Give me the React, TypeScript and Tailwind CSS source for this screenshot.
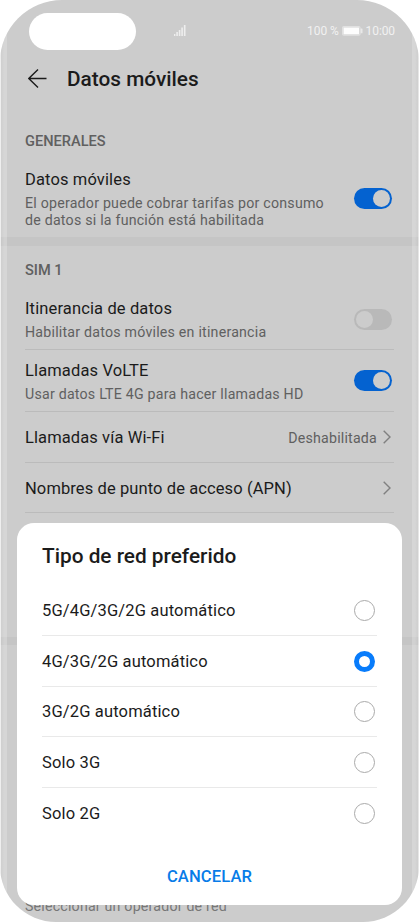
import React, { useState } from 'react';
import clsx from 'clsx';

const NETWORK_TYPES = [
  '5G/4G/3G/2G automático',
  '4G/3G/2G automático',
  '3G/2G automático',
  'Solo 3G',
  'Solo 2G',
];

const Toggle: React.FC<{ on: boolean }> = ({ on }) => (
  <span
    className={clsx(
      'flex h-[21px] w-[38px] shrink-0 items-center rounded-full px-[2px]',
      on ? 'justify-end bg-[#0462d0]' : 'justify-start bg-[#b9b9b9]',
    )}
  >
    <span className="h-[17px] w-[17px] rounded-full bg-[#cccccc]" />
  </span>
);

const Chevron = () => (
  <svg width="8" height="14" viewBox="0 0 8 14" fill="none" stroke="#808080" strokeWidth="1.4">
    <path d="M0.7 0.7 7 7 0.7 13.3" />
  </svg>
);

interface SwitchRowProps {
  title: string;
  text: string;
  on: boolean;
  className?: string;
}

const SwitchRow: React.FC<SwitchRowProps> = ({ title, text, on, className }) => (
  <div className={clsx('mx-[25px] flex items-center justify-between pr-[2px]', className)}>
    <div className="pt-[2px]">
      <div className="text-[16.5px] leading-[20px] tracking-[0.13px] text-[#1b1b1b]">{title}</div>
      <div className="mt-[5px] whitespace-pre-line text-[14.2px] leading-[17px] tracking-[0.22px] text-[#606060]">
        {text}
      </div>
    </div>
    <Toggle on={on} />
  </div>
);

const LinkRow: React.FC<{ title: string; value?: string; className?: string }> = ({ title, value, className }) => (
  <div className={clsx('mx-[25px] flex items-center justify-between border-b border-[#bbbbbb] pr-[3px]', className)}>
    <span className="pt-[2px] text-[16.5px] leading-[20px] tracking-[0.1px] text-[#1b1b1b]">{title}</span>
    <span className="flex items-center gap-[6px] text-[14.2px] leading-[18px] tracking-[0.2px] text-[#606060]">
      <span className="pt-px">{value}</span>
      <Chevron />
    </span>
  </div>
);

const StatusBar = () => (
  <div className="flex h-[50px] items-end">
    <div className="ml-[29px] h-[37px] w-[107px] rounded-full bg-white" />
    <svg className="mb-[14px] ml-[38px]" width="12" height="11" viewBox="0 0 12 11" fill="#eeeeee">
      <rect x="0" y="9" width="1.4" height="2" />
      <rect x="2.3" y="7" width="1.6" height="4" />
      <rect x="4.8" y="5" width="1.6" height="6" />
      <rect x="7.3" y="2.5" width="1.6" height="8.5" />
      <rect x="9.9" y="0" width="1.6" height="11" />
    </svg>
    <div className="mr-[24px] mb-[11px] ml-auto flex items-center text-[12px] leading-[16px] tracking-[-0.1px] text-[#f1f1f1]">
      <span>100 %</span>
      <svg className="mr-[3px] ml-[3px]" width="21" height="10" viewBox="0 0 21 10">
        <rect x="0.6" y="0.6" width="17.4" height="8.6" rx="1.2" fill="none" stroke="#e1e1e1" strokeWidth="1.2" />
        <rect x="1.5" y="1.5" width="15.5" height="6.8" fill="#fdfdfd" />
        <rect x="18.6" y="2.5" width="1.9" height="4.8" rx="0.6" fill="#e8e8e8" />
      </svg>
      <span>10:00</span>
    </div>
  </div>
);

interface NetworkDialogProps {
  selected: string;
  onSelect: (type: string) => void;
}

const NetworkDialog: React.FC<NetworkDialogProps> = ({ selected, onSelect }) => (
  <div className="absolute top-[523px] left-[17px] flex h-[382px] w-[385px] flex-col rounded-[17px] bg-white px-[25px]">
    <h2 className="mt-[21px] text-[20.8px] leading-[24px] font-medium text-[#1b1b1b]">Tipo de red preferido</h2>
    <div className="mt-[17px]">
      {NETWORK_TYPES.map((type) => (
        <button
          key={type}
          onClick={() => onSelect(type)}
          className="flex h-[50.8px] w-full items-center justify-between border-b border-[#e9e9e9] pr-[2px] last:h-[49px] last:border-b-0"
        >
          <span className="pt-[2px] text-[16.5px] leading-[20px] tracking-[0.15px] text-[#1b1b1b]">{type}</span>
          <span
            className={clsx(
              'mt-px h-[21px] w-[21px] rounded-full',
              type === selected ? 'border-[5px] border-[#087cfb]' : 'border border-[#aaaaaa]',
            )}
          />
        </button>
      ))}
    </div>
    <button className="mx-auto mt-[30px] text-[16.6px] leading-[20px] font-medium tracking-[0.1px] text-[#087ce8]">
      CANCELAR
    </button>
  </div>
);

const App = () => {
  const [selected, setSelected] = useState(NETWORK_TYPES[1]);

  return (
    <div className="h-[922px] w-[419px] overflow-hidden bg-white font-['Roboto','Liberation_Sans',sans-serif]">
      <div className="relative h-[922px] w-[419px] overflow-hidden rounded-t-[62px] rounded-b-[56px] bg-[#cccccc]">
        <StatusBar />
        <header className="flex h-[58px] items-center pl-[28px]">
          <svg width="19" height="20" viewBox="0 0 19 20" fill="none" stroke="#1b1b1b" strokeWidth="1.4">
            <path d="M18.5 9.5H0.8M10 0.5.8 9.5l9.2 9" />
          </svg>
          <h1 className="ml-[20px] text-[20.8px] leading-[28px] font-medium text-[#1b1b1b]">Datos móviles</h1>
        </header>

        <h3 className="mt-[23px] ml-[25px] text-[14.6px] leading-[20px] font-medium text-[#606060]">GENERALES</h3>
        <SwitchRow
          className="mt-[17px]"
          title="Datos móviles"
          text={'El operador puede cobrar tarifas por consumo\nde datos si la función está habilitada'}
          on
        />
        <div className="mt-[8px] h-[9px] bg-[#c5c5c5]" />

        <h3 className="mt-[14px] ml-[25px] text-[14.6px] leading-[20px] font-medium text-[#606060]">SIM 1</h3>
        <SwitchRow
          className="mt-[9px] h-[61px] border-b border-[#bbbbbb]"
          title="Itinerancia de datos"
          text="Habilitar datos móviles en itinerancia"
          on={false}
        />
        <SwitchRow
          className="h-[62px] border-b border-[#bbbbbb]"
          title="Llamadas VoLTE"
          text="Usar datos LTE 4G para hacer llamadas HD"
          on
        />
        <LinkRow className="h-[51px]" title="Llamadas vía Wi-Fi" value="Deshabilitada" />
        <LinkRow className="h-[50px]" title="Nombres de punto de acceso (APN)" />
        <div className="mt-[124px] h-[8px] bg-[#c5c5c5]" />
        <div className="mt-[253px] ml-[25px] text-[14.2px] leading-[17px] tracking-[0.2px] text-[#777777]">
          Seleccionar un operador de red
        </div>

        {/* curved glass edges */}
        <div className="absolute inset-y-0 left-0 w-[7px] border-l border-white/60 bg-linear-to-r from-white/5 via-white/20 to-white/20" />
        <div className="absolute inset-y-0 right-0 w-[7px] border-r border-white/40 bg-linear-to-l from-white/5 via-white/20 to-white/20" />

        <NetworkDialog selected={selected} onSelect={setSelected} />
      </div>
    </div>
  );
};

export default App;
